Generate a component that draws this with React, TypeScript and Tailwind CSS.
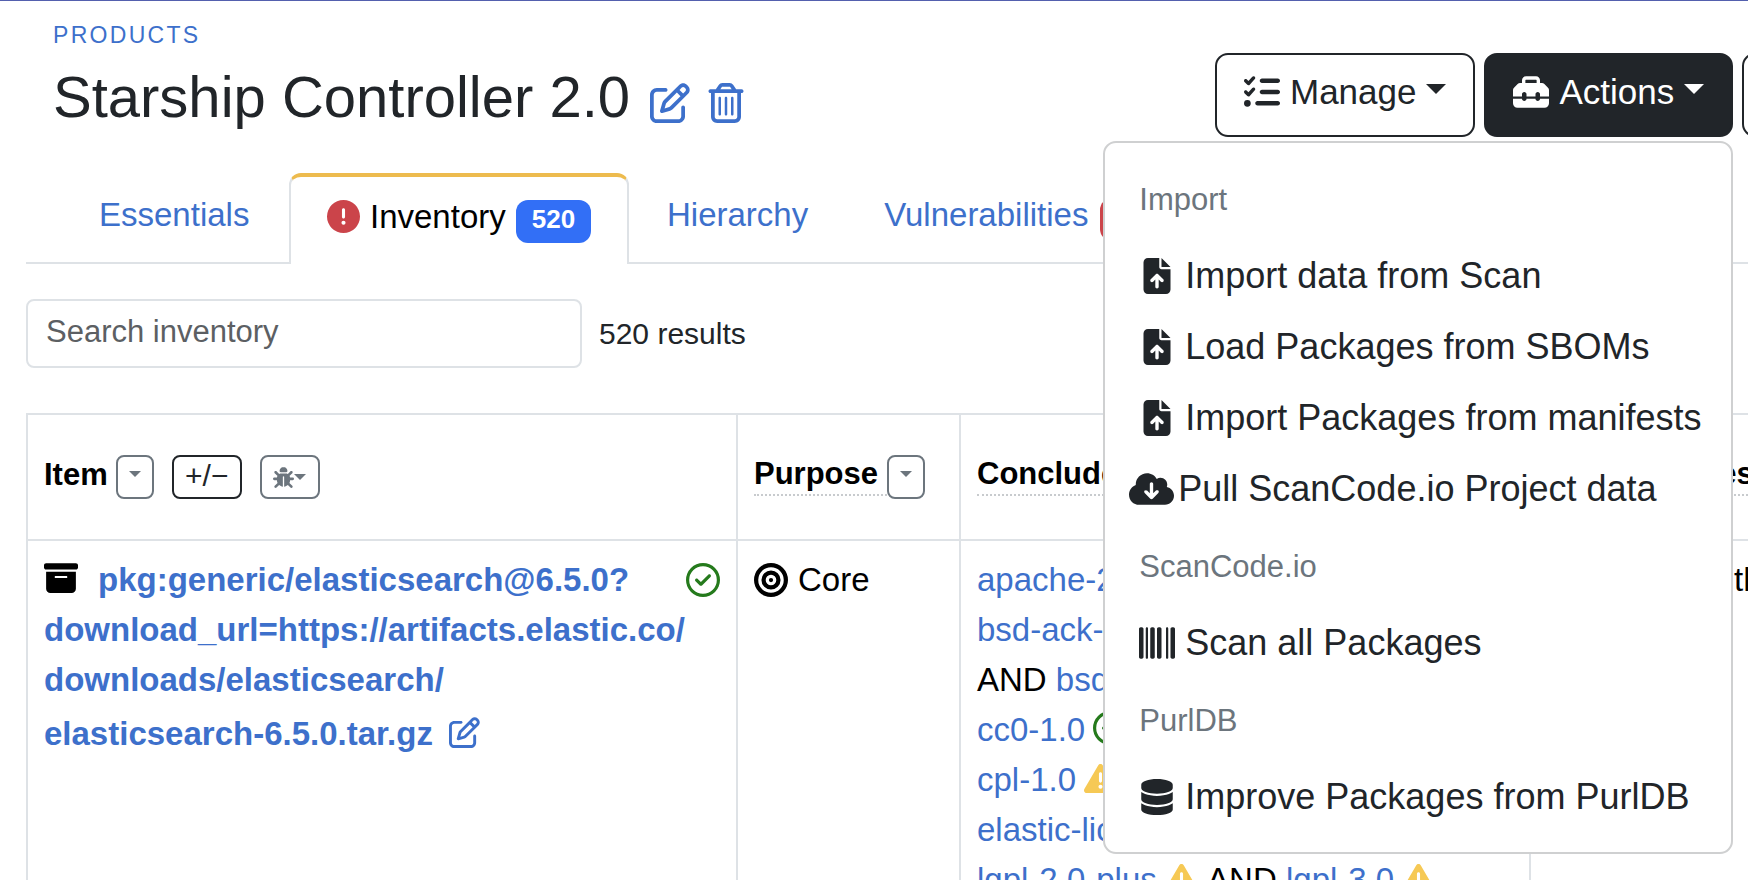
import React from "react";
import {
  FaRegPenToSquare,
  FaRegTrashCan,
  FaListCheck,
  FaToolbox,
  FaFileArrowUp,
  FaCloudArrowDown,
  FaBarcode,
  FaDatabase,
  FaCircleExclamation,
  FaBoxArchive,
  FaRegCircleCheck,
  FaBullseye,
  FaTriangleExclamation,
  FaBug,
} from "react-icons/fa6";

const LINK = "text-[#3d70cb]";

function Caret({ small = false }: { small?: boolean }) {
  return (
    <svg
      viewBox="0 0 20 10"
      className={small ? "h-[6px] w-[12px]" : "mb-1.5 h-[10px] w-5"}
      fill="currentColor"
      aria-hidden="true"
    >
      <path d="M0 0h20L10 10z" />
    </svg>
  );
}

function FilterButton({ label }: { label: string }) {
  return (
    <button
      aria-label={label}
      className="flex h-11 w-[38px] items-center justify-center rounded-lg border-2 border-[#6c757d] pb-1.5 text-[#6c757d]"
    >
      <Caret small />
    </button>
  );
}

function MenuHeader({ children }: { children: React.ReactNode }) {
  return (
    <h6 className="flex h-[83px] items-center px-[34px] pt-1 text-[31px] text-[#6c757d]">
      {children}
    </h6>
  );
}

function MenuItem({ icon, children }: { icon: React.ReactNode; children: React.ReactNode }) {
  return (
    <a href="#" className="flex h-[71px] items-center gap-2.5 px-[34px] whitespace-nowrap">
      <span className="flex w-9 justify-center">{icon}</span>
      {children}
    </a>
  );
}

function ActionsMenu() {
  return (
    <div className="absolute top-full right-0 z-10 mt-1 w-[630px] rounded-[13px] border-2 border-[#cfd0d1] bg-white pt-3.5 pb-5 text-4xl leading-normal text-[#212529]">
      <MenuHeader>Import</MenuHeader>
      <MenuItem icon={<FaFileArrowUp />}>Import data from Scan</MenuItem>
      <MenuItem icon={<FaFileArrowUp />}>Load Packages from SBOMs</MenuItem>
      <MenuItem icon={<FaFileArrowUp />}>Import Packages from manifests</MenuItem>
      <a href="#" className="flex h-[71px] items-center gap-1 px-6 whitespace-nowrap">
        <FaCloudArrowDown className="h-9 w-[45px]" />
        Pull ScanCode.io Project data
      </a>
      <MenuHeader>ScanCode.io</MenuHeader>
      <MenuItem icon={<FaBarcode />}>Scan all Packages</MenuItem>
      <MenuHeader>PurlDB</MenuHeader>
      <MenuItem icon={<FaDatabase />}>Improve Packages from PurlDB</MenuItem>
    </div>
  );
}

function HintLabel({ children }: { children: React.ReactNode }) {
  return (
    <span className="border-b-2 border-dotted border-[#c8cbce] pr-[9px] pb-1 leading-8 whitespace-nowrap">
      {children}
    </span>
  );
}

function License({ name, status }: { name: string; status?: "ok" | "warn" }) {
  return (
    <>
      <a href="#" className={LINK}>
        {name}
      </a>
      {status === "ok" && (
        <FaRegCircleCheck className="ml-2 inline align-[-4px] text-[34px] text-[#257a1c]" />
      )}
      {status === "warn" && (
        <FaTriangleExclamation className="mr-0.5 ml-2 inline align-[-4px] text-[#f6c955]" />
      )}
    </>
  );
}

export default function App() {
  return (
    <div className="h-screen overflow-hidden border-t border-[#5360ae] bg-white font-['Liberation_Sans',Arial,sans-serif] text-[#212529]">
      <header className="flex justify-between pl-[53px]">
        <div className="pt-4">
          <a href="#" className={`block text-[23px] leading-9 tracking-[0.1em] ${LINK}`}>
            PRODUCTS
          </a>
          <div className="flex items-center">
            <h1 className="text-[58px] leading-[88px]">Starship Controller 2.0</h1>
            <a href="#" aria-label="Edit product" className={`ml-5 pt-3 text-[40px] ${LINK}`}>
              <FaRegPenToSquare />
            </a>
            <a href="#" aria-label="Delete product" className={`ml-4 pt-3 text-[40px] ${LINK}`}>
              <FaRegTrashCan />
            </a>
          </div>
        </div>
        <div className="flex w-[533px] shrink-0 gap-[9px] overflow-visible pt-[52px] text-[35px]">
          <button className="flex h-[84px] shrink-0 items-center rounded-[13px] border-2 border-[#212529] px-[27px] pb-1.5">
            <FaListCheck className="text-4xl" />
            <span className="mr-2.5 ml-2.5">Manage</span>
            <Caret />
          </button>
          <div className="relative h-[84px] shrink-0">
            <button
              aria-expanded="true"
              className="flex h-[84px] items-center rounded-[13px] border-2 border-[#212529] bg-[#212529] px-[27px] pb-1.5 text-white"
            >
              <FaToolbox className="text-4xl" />
              <span className="mr-2.5 ml-2.5">Actions</span>
              <Caret />
            </button>
            <ActionsMenu />
          </div>
          <button
            aria-label="More"
            className="h-[84px] w-24 shrink-0 rounded-[13px] border-2 border-[#212529]"
          />
        </div>
      </header>

      <nav className="mt-8 ml-[26px] flex h-[91px] text-[33px] whitespace-nowrap">
        <a
          href="#"
          className={`flex w-[263px] shrink-0 items-center border-b-2 border-[#dee2e6] pb-1.5 pl-[73px] ${LINK}`}
        >
          Essentials
        </a>
        <a
          href="#"
          className="flex w-[340px] shrink-0 items-center rounded-t-xl border-x-2 border-t-4 border-x-[#dee2e6] border-t-[#edbb4e] pb-2 pl-9 text-black"
        >
          <FaCircleExclamation className="text-[#cb444a]" />
          <span className="ml-2.5">Inventory</span>
          <span className="mt-2.5 ml-2.5 rounded-xl bg-[#326ff6] px-4 pt-1 pb-2 text-[26px] leading-[31px] font-bold text-white">
            520
          </span>
        </a>
        <div className="flex grow items-center border-b-2 border-[#dee2e6] pb-1.5">
          <a href="#" className={`ml-[38px] ${LINK}`}>
            Hierarchy
          </a>
          <a href="#" className={`ml-[76px] flex items-center ${LINK}`}>
            Vulnerabilities
            <span className="mt-2.5 ml-3 rounded-xl bg-[#cb444a] px-4 pt-1 pb-2 text-[26px] leading-[31px] font-bold text-white">
              8
            </span>
          </a>
        </div>
      </nav>

      <div className="mt-[35px] ml-[26px] flex items-center gap-[17px]">
        <input
          type="search"
          aria-label="Search inventory"
          placeholder="Search inventory"
          className="h-[69px] w-[556px] rounded-lg border-2 border-[#dee2e6] px-[18px] pb-1 text-[31px] placeholder:text-[#5c5f63]"
        />
        <span className="text-[30px]">520 results</span>
      </div>

      <table className="mt-[45px] ml-[26px] w-[1960px] table-fixed border-collapse text-[33px] leading-[50px] text-black">
        <colgroup>
          <col className="w-[710px]" />
          <col className="w-[223px]" />
          <col className="w-[570px]" />
          <col />
        </colgroup>
        <thead className="text-left text-[31px]">
          <tr className="h-[126px]">
            <th className="border-2 border-[#dee2e6] px-4">
              <div className="flex items-center">
                <span className="pb-1">Item</span>
                <span className="ml-2 flex gap-[18px]">
                  <FilterButton label="Filter items" />
                  <button
                    aria-label="Expand or collapse"
                    className="flex h-11 w-[70px] items-center justify-center rounded-lg border-2 border-[#212529] pb-0.5 text-[30px] font-normal text-[#212529]"
                  >
                    +/−
                  </button>
                  <button
                    aria-label="Filter issues"
                    className="flex h-11 w-[60px] items-center justify-center rounded-lg border-2 border-[#6c757d] text-[21px] text-[#6c757d]"
                  >
                    <FaBug />
                    <Caret small />
                  </button>
                </span>
              </div>
            </th>
            <th className="border-2 border-[#dee2e6] px-4">
              <div className="flex items-center">
                <HintLabel>Purpose</HintLabel>
                <FilterButton label="Filter purposes" />
              </div>
            </th>
            <th className="border-2 border-[#dee2e6] px-4">
              <div className="flex">
                <HintLabel>Concluded license</HintLabel>
              </div>
            </th>
            <th className="border-2 border-[#dee2e6] px-4">
              <div className="flex">
                <HintLabel>License notes</HintLabel>
              </div>
            </th>
          </tr>
        </thead>
        <tbody>
          <tr className="align-top">
            <td className="border-2 border-[#dee2e6] px-4 py-3.5">
              <div className="flex items-start justify-between">
                <div className={`font-bold ${LINK}`}>
                  <FaBoxArchive className="mr-5 inline align-[-4px] text-[34px] text-black" />
                  <a href="#">
                    pkg:generic/elasticsearch@6.5.0?
                    <br />
                    download_url=https://artifacts.elastic.co/
                    <br />
                    downloads/elasticsearch/
                    <br />
                    elasticsearch-6.5.0.tar.gz
                  </a>
                  <a href="#" aria-label="Edit item" className="ml-4">
                    <FaRegPenToSquare className="mt-3 inline align-[-3px] text-[31px]" />
                  </a>
                </div>
                <FaRegCircleCheck className="mt-2 -ml-9 shrink-0 text-[34px] text-[#257a1c]" />
              </div>
            </td>
            <td className="border-2 border-[#dee2e6] px-4 py-3.5">
              <div className="flex items-center gap-2.5">
                <FaBullseye className="text-[34px]" />
                Core
              </div>
            </td>
            <td className="border-2 border-[#dee2e6] px-4 py-3.5 whitespace-nowrap">
              <License name="apache-2.0" status="ok" /> AND
              <br />
              <License name="bsd-ack-carrot2" status="ok" />
              <br />
              AND <License name="bsd-new" status="ok" /> AND
              <br />
              <License name="cc0-1.0" status="ok" /> AND
              <br />
              <License name="cpl-1.0" status="warn" /> AND
              <br />
              <License name="elastic-license-2018" />
              <br />
              <License name="lgpl-2.0-plus" status="warn" /> AND{" "}
              <License name="lgpl-3.0" status="warn" />
            </td>
            <td className="border-2 border-[#dee2e6] px-4 py-3.5 whitespace-nowrap">
              Copyright of the authors
            </td>
          </tr>
        </tbody>
      </table>
    </div>
  );
}
